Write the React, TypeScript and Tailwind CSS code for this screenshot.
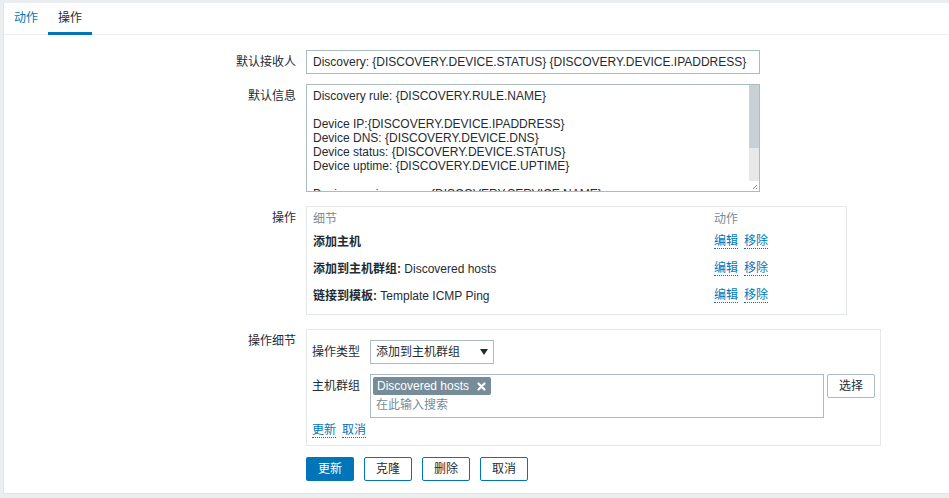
import React from 'react';

const Link = ({ children }: { children: React.ReactNode }) => (
  <span className="inline-block leading-[13px] text-[#0275b8] border-b border-dotted border-[#0275b8] cursor-pointer">
    {children}
  </span>
);

const operations = [
  { title: '添加主机', value: '' },
  { title: '添加到主机群组:', value: ' Discovered hosts' },
  { title: '链接到模板:', value: ' Template ICMP Ping' },
];

const message = [
  'Discovery rule: {DISCOVERY.RULE.NAME}',
  '',
  'Device IP:{DISCOVERY.DEVICE.IPADDRESS}',
  'Device DNS: {DISCOVERY.DEVICE.DNS}',
  'Device status: {DISCOVERY.DEVICE.STATUS}',
  'Device uptime: {DISCOVERY.DEVICE.UPTIME}',
  '',
  'Device service name: {DISCOVERY.SERVICE.NAME}',
].join('\n');

const FormRow = ({ label, className = '', children }: { label: string; className?: string; children: React.ReactNode }) => (
  <div className={`flex ${className}`}>
    <div className="w-[302px] shrink-0 pr-[10px] pt-[5px] text-right">{label}</div>
    {children}
  </div>
);

export default function App() {
  return (
    <div className="min-h-screen bg-[#ebeef0] pl-[3px] pt-[3px] text-[12px] leading-[14px] text-[#1f2c33] font-['Liberation_Sans',Arial,'Noto_Sans_CJK_SC',sans-serif]">
      <div className="h-[491px] bg-white border-l border-b border-[#dfe4e7]">
        {/* tabs */}
        <div className="flex h-[32px] border-b border-[#ebeef0]">
          <div className="px-[10px] pt-[8px] text-[#0275b8]">动作</div>
          <div className="relative px-[10px] pt-[8px]">
            操作
            <span className="absolute left-0 right-0 bottom-[-1px] h-[3px] bg-[#0275b8]" />
          </div>
        </div>

        <div className="pt-[15px]">
          <FormRow label="默认接收人">
            <div className="flex h-[24px] w-[454px] items-center border border-[#acbbc2] px-[6px] whitespace-nowrap">
              Discovery: {'{DISCOVERY.DEVICE.STATUS}'} {'{DISCOVERY.DEVICE.IPADDRESS}'}
            </div>
          </FormRow>

          <FormRow label="默认信息" className="mt-[10px]">
            <div className="flex h-[108px] w-[454px] border border-[#acbbc2]">
              <div className="flex-1 overflow-hidden whitespace-pre px-[6px] pt-[4px]">{message}</div>
              <div className="flex w-[10px] flex-col bg-[#e8e8e8]">
                <div className="h-[63px] bg-[#c9d1d6]" />
                <div className="flex-1" />
                <svg width="10" height="10" viewBox="0 0 10 10" className="bg-white">
                  <path d="M8 4 L4 8 M8 7 L7 8" stroke="#8a8a8a" strokeWidth="1" />
                </svg>
              </div>
            </div>
          </FormRow>

          <FormRow label="操作" className="mt-[14px]">
            <div className="h-[109px] w-[541px] border border-[#e4e8ea] pl-[6px]">
              <div className="flex h-[21px] pt-[5px] text-[#768d99]">
                <div className="w-[401px]">细节</div>
                <div>动作</div>
              </div>
              {operations.map((op) => (
                <div key={op.title} className="flex h-[27px] items-center">
                  <div className="w-[401px]">
                    <span className="font-bold">{op.title}</span>
                    {op.value}
                  </div>
                  <div className="flex gap-[6px]">
                    <Link>编辑</Link>
                    <Link>移除</Link>
                  </div>
                </div>
              ))}
            </div>
          </FormRow>

          <FormRow label="操作细节" className="mt-[14px]">
            <div className="h-[117px] w-[575px] border border-[#e4e8ea] px-[5px] pt-[10px]">
              <div className="flex">
                <div className="w-[58px] pt-[5px]">操作类型</div>
                <div className="flex h-[24px] w-[124px] items-center justify-between border border-[#acbbc2] pl-[5px] pr-[5px]">
                  <span>添加到主机群组</span>
                  <svg width="8" height="6" viewBox="0 0 8 6">
                    <path d="M0 0 H8 L4 6 Z" fill="#1f2c33" />
                  </svg>
                </div>
              </div>

              <div className="mt-[10px] flex">
                <div className="w-[58px] pt-[5px]">主机群组</div>
                <div className="h-[44px] w-[454px] border border-[#acbbc2] px-[2px] pt-[2px]">
                  <div className="inline-flex h-[18px] items-center gap-[8px] rounded-[2px] bg-[#768d99] pl-[4px] pr-[5px] text-white">
                    <span>Discovered hosts</span>
                    <svg width="9" height="9" viewBox="0 0 9 9">
                      <path d="M1.5 1.5 L7.5 7.5 M7.5 1.5 L1.5 7.5" stroke="#ffffff" strokeWidth="2.2" strokeLinecap="round" />
                    </svg>
                  </div>
                  <div className="mt-[3px] pl-[3px] text-[#768d99]">在此输入搜索</div>
                </div>
                <button className="ml-[3px] flex h-[24px] w-[48px] items-center justify-center rounded-[2px] border border-[#acbbc2] bg-white">
                  选择
                </button>
              </div>

              <div className="mt-[6px] flex gap-[6px]">
                <Link>更新</Link>
                <Link>取消</Link>
              </div>
            </div>
          </FormRow>

          <div className="mt-[11px] flex gap-[10px] pl-[302px]">
            <button className="h-[24px] w-[48px] rounded-[2px] bg-[#0275b8] text-white">更新</button>
            <button className="h-[24px] w-[48px] rounded-[2px] border border-[#0275b8] bg-white text-[#1f2c33]">克隆</button>
            <button className="h-[24px] w-[48px] rounded-[2px] border border-[#0275b8] bg-white text-[#1f2c33]">删除</button>
            <button className="h-[24px] w-[48px] rounded-[2px] border border-[#0275b8] bg-white text-[#1f2c33]">取消</button>
          </div>
        </div>
      </div>
    </div>
  );
}
